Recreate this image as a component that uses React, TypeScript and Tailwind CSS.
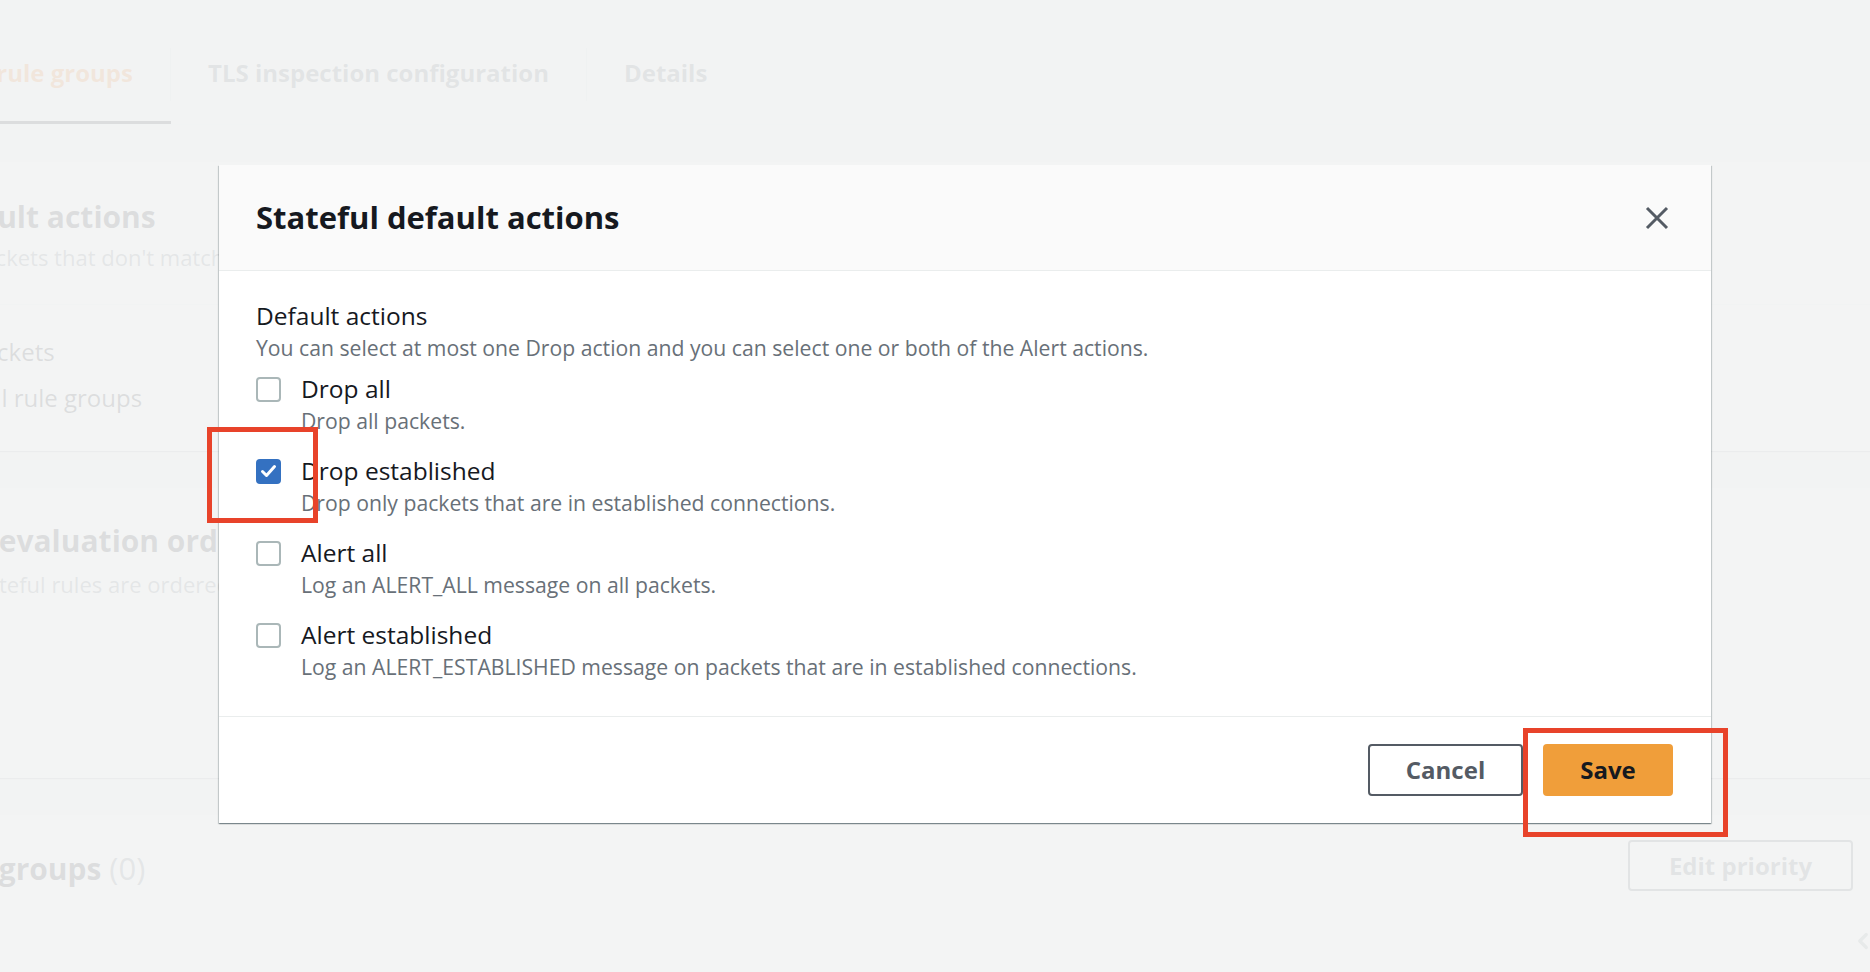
import { ChevronLeft } from 'lucide-react';

type Option = { label: string; description: string; checked: boolean };

const options: Option[] = [
  { label: 'Drop all', description: 'Drop all packets.', checked: false },
  { label: 'Drop established', description: 'Drop only packets that are in established connections.', checked: true },
  { label: 'Alert all', description: 'Log an ALERT_ALL message on all packets.', checked: false },
  {
    label: 'Alert established',
    description: 'Log an ALERT_ESTABLISHED message on packets that are in established connections.',
    checked: false,
  },
];

function Checkbox({ checked }: { checked: boolean }) {
  if (checked) {
    return (
      <div className="w-[25px] h-[25px] rounded-[4px] bg-[#3471c1] flex items-center justify-center shrink-0">
        <svg width="25" height="25" viewBox="0 0 25 25" fill="none">
          <path d="M6.5 12.5 L10.5 16.5 L18.5 7.5" stroke="white" strokeWidth="3" strokeLinecap="round" strokeLinejoin="round" />
        </svg>
      </div>
    );
  }
  return <div className="w-[25px] h-[25px] rounded-[4px] border-2 border-[#aab7b8] bg-white shrink-0" />;
}

function BackgroundPage() {
  return (
    <div className="flex flex-col">
      {/* tab bar */}
      <div className="flex h-[125px] border-b border-[#eaeded] text-[24px] font-bold whitespace-nowrap">
        <div className="flex flex-col w-[171px]">
          <div className="mt-[48px] h-[53px] flex items-center justify-end pr-[37px] pb-[4px] border-r border-[#d5dbdb] text-[#ec7211]">
            Stateful rule groups
          </div>
          <div className="mt-auto h-[3px] bg-[#16191f]" />
        </div>
        <div className="mt-[48px] h-[53px] flex items-center px-[37px] pb-[4px] border-r border-[#d5dbdb] text-[#545b64]">
          TLS inspection configuration
        </div>
        <div className="mt-[48px] h-[53px] flex items-center px-[37px] pb-[4px] text-[#545b64]">Details</div>
      </div>

      {/* cards */}
      <div className="ml-[-230px] w-[2117px] flex flex-col gap-[37px] pt-[37px] whitespace-nowrap">
        <div className="bg-white shadow-[0_1px_1px_0_rgba(0,28,36,0.3)]">
          <div className="px-[34px] pt-[35px] pb-[32px] border-b border-[#eaeded]">
            <div className="text-[30px] leading-[40px] font-bold text-[#16191f]">Stateful default actions</div>
            <div className="mt-[5px] text-[22px] leading-[30px] text-[#687078]">
              Action taken on packets that don't match any stateful rules.
            </div>
          </div>
          <div className="pl-[46px] pr-[34px] pt-[29px] pb-[35px] flex flex-col gap-[10px] text-[24px] leading-[36px] text-[#16191f]">
            <div>Drop stateful packets</div>
            <div>Applies across all rule groups</div>
          </div>
        </div>

        <div className="bg-white shadow-[0_1px_1px_0_rgba(0,28,36,0.3)] h-[290px] px-[34px] pt-[33px]">
          <div className="text-[30px] leading-[40px] font-bold text-[#16191f]">Stateful rule evaluation order</div>
          <div className="mt-[8px] text-[22px] leading-[30px] text-[#687078]">
            Determine how stateful rules are ordered and evaluated.
          </div>
        </div>

        <div className="bg-white shadow-[0_1px_1px_0_rgba(0,28,36,0.3)] h-[200px] px-[34px] pt-[25px]">
          <div className="flex items-start justify-between">
            <div className="mt-[8px] text-[30px] leading-[40px] font-bold text-[#16191f]">
              Stateful rule groups <span className="font-normal text-[31px] text-[#687078]">(0)</span>
            </div>
            <div className="w-[225px] h-[51px] rounded-[4px] border-2 border-[#545b64] flex items-center justify-center text-[24px] font-bold text-[#545b64]">
              Edit priority
            </div>
          </div>
          <div className="flex justify-end mt-[37px] mr-[-23px]">
            <ChevronLeft size={26} strokeWidth={3} className="text-[#879596]" />
          </div>
        </div>
      </div>
    </div>
  );
}

export default function App() {
  return (
    <div
      className="relative w-[1870px] h-[972px] overflow-hidden bg-[#f2f3f3]"
      style={{ fontFamily: '"Open Sans", "Liberation Sans", sans-serif' }}
    >
      <BackgroundPage />

      {/* overlay */}
      <div className="absolute inset-0 bg-[#f2f3f3]/90" />

      {/* modal */}
      <div className="absolute left-[219px] top-[165px] w-[1492px] bg-white shadow-[0_1px_1px_0_rgba(0,28,36,0.3),1px_1px_1px_0_rgba(0,28,36,0.15),-1px_1px_1px_0_rgba(0,28,36,0.15)]">
        <div className="h-[106px] bg-[#fafafa] border-b border-[#eaeded] flex items-center justify-between pl-[37px] pr-[42px]">
          <h2 className="text-[31px] font-bold text-[#16191f]">Stateful default actions</h2>
          <svg width="24" height="24" viewBox="0 0 24 24" fill="none">
            <path d="M2 2 L22 22 M22 2 L2 22" stroke="#545b64" strokeWidth="3" />
          </svg>
        </div>

        <div className="pl-[37px] pt-[28px] pb-[34px]">
          <div className="text-[24.5px] leading-[34px] text-[#16191f]">Default actions</div>
          <div className="text-[21.2px] leading-[30px] text-[#687078]">
            You can select at most one Drop action and you can select one or both of the Alert actions.
          </div>
          <div className="mt-[9px] flex flex-col gap-[18px]">
            {options.map((opt) => (
              <div key={opt.label} className="flex gap-[20px]">
                <div className="h-[34px] flex items-center">
                  <Checkbox checked={opt.checked} />
                </div>
                <div>
                  <div className="text-[24.5px] leading-[34px] text-[#16191f]">{opt.label}</div>
                  <div className="text-[21.2px] leading-[30px] text-[#687078]">{opt.description}</div>
                </div>
              </div>
            ))}
          </div>
        </div>

        <div className="h-[107px] border-t border-[#eaeded] flex items-center justify-end gap-[20px] pr-[38px]">
          <button className="w-[155px] h-[52px] rounded-[4px] border-2 border-[#545b64] bg-white text-[24px] font-bold text-[#545b64]">
            Cancel
          </button>
          <button className="w-[130px] h-[52px] rounded-[4px] bg-[#f09e3a] text-[24px] font-bold text-[#16191f]">
            Save
          </button>
        </div>
      </div>

      {/* annotation boxes */}
      <div className="absolute left-[207px] top-[427px] w-[111px] h-[96px] border-[5px] border-[#e8432a]" />
      <div className="absolute left-[1523px] top-[728px] w-[205px] h-[109px] border-[5px] border-[#e8432a]" />
    </div>
  );
}
